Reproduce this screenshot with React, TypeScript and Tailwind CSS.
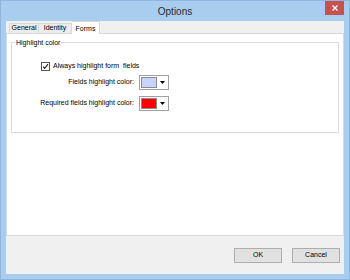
import React from "react";

const font = { fontFamily: '"Liberation Sans", Arial, sans-serif' };

function ColorPick({ color }: { color: string }) {
  return (
    <div className="w-[30px] h-[15px] border border-[#a0a0a0] bg-white flex items-center p-[1px]">
      <div className="w-[16px] h-full border border-[#8c8c8c]" style={{ background: color }} />
      <div className="flex-1 flex items-center justify-center">
        <svg width="5" height="3" viewBox="0 0 5 3">
          <path d="M0 0H5L2.5 3Z" fill="#000" />
        </svg>
      </div>
    </div>
  );
}

export default function App() {
  return (
    <div
      className="w-[350px] h-[280px] bg-[#a9cdee] border border-[#8fb6de] flex flex-col text-[7px] text-black"
      style={font}
    >
      {/* title bar */}
      <div className="h-[20px] relative flex items-center justify-center">
        <span className="text-[10px] text-[#2a2a2a]">Options</span>
        <div className="absolute right-[5px] top-0 w-[19px] h-[14px] bg-[#c75050] flex items-center justify-center">
          <svg width="6" height="6" viewBox="0 0 6 6">
            <path d="M0.5 0.5L5.5 5.5M5.5 0.5L0.5 5.5" stroke="#fff" strokeWidth="1.3" />
          </svg>
        </div>
      </div>
      {/* client */}
      <div className="flex-1 mx-[5px] mb-[5px] bg-[#f0f0f0] flex flex-col">
        {/* tabs */}
        <div className="h-[12px] flex items-end pl-[3px] relative z-10">
          <div className="h-[10px] px-[2px] border border-b-0 border-[#d9d9d9] bg-[#ececec] flex items-center w-[30px] justify-center">
            General
          </div>
          <div className="h-[10px] border border-b-0 border-l-0 border-[#d9d9d9] bg-[#ececec] flex items-center w-[33px] justify-center">
            Identity
          </div>
          <div className="h-[13px] -mb-[1px] border border-b-0 border-l-0 border-[#d9d9d9] bg-white flex items-start pt-[2px] w-[28px] justify-center">
            Forms
          </div>
        </div>
        {/* page */}
        <div className="h-[203px] bg-white border border-[#d9d9d9] px-[4px] pt-[4px]">
          <fieldset className="border border-[#dcdcdc] h-[95px] px-0 pt-0 pb-0">
            <legend className="ml-[3px] px-[1px] leading-[9px]">Highlight color</legend>
            <div className="flex items-center pl-[29px] mt-[14px] h-[10px]">
              <div className="w-[9px] h-[9px] border border-[#555] bg-white flex items-center justify-center">
                <svg width="7" height="7" viewBox="0 0 7 7">
                  <path d="M1 3.6L2.7 5.4L6 1.2" stroke="#222" strokeWidth="1.1" fill="none" />
                </svg>
              </div>
              <span className="ml-[3px]">Always highlight form&nbsp; fields</span>
            </div>
            <div className="grid grid-cols-[122px_auto] gap-x-[5px] gap-y-[6px] mt-[4px] items-center">
              <span className="text-right">Fields highlight color:</span>
              <ColorPick color="#c8d4ff" />
              <span className="text-right">Required fields highlight color:</span>
              <ColorPick color="#ff0000" />
            </div>
          </fieldset>
        </div>
        {/* footer */}
        <div className="flex-1 flex justify-end items-start pt-[12px] pr-[4px] gap-[10px]">
          <button className="w-[48px] h-[15px] bg-[#e1e1e1] border border-[#adadad] flex items-center justify-center text-[7px]">
            OK
          </button>
          <button className="w-[48px] h-[15px] bg-[#e1e1e1] border border-[#adadad] flex items-center justify-center text-[7px]">
            Cancel
          </button>
        </div>
      </div>
    </div>
  );
}
